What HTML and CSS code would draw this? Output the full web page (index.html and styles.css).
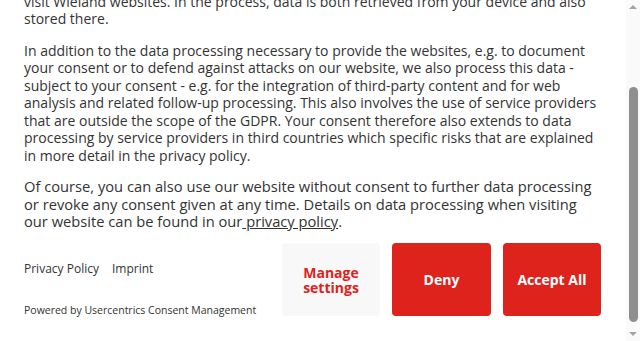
FILE: index.html
```html
<!DOCTYPE html>
<html lang="en">
<head>
  <meta charset="UTF-8">
  <meta name="viewport" content="width=device-width, initial-scale=1.0">
  <link rel="stylesheet" href="styles.css">
</head>
<body>

<div class="frame">
  <div class="banner" id="banner">
    <div class="banner-body">
      <h2 class="banner-title">Privacy Settings</h2>
      <p>We use cookies and similar technologies (hereinafter "technologies") when you<br>
      visit Wieland websites. In the process, data is both retrieved from your device and also
      stored there.</p>

      <p>In addition to the data processing necessary to provide the websites, e.g. to document
      your consent or to defend against attacks on our website, we also process this data -
      subject to your consent - e.g. for the integration of third-party content and for web
      analysis and related follow-up processing. This also involves the use of service providers
      that are outside the scope of the GDPR. Your consent therefore also extends to data
      processing by service providers in third countries which specific risks that are explained
      in more detail in the privacy policy.</p>

      <p class="closing">Of course, you can also use our website without consent to further data processing
      or revoke any consent given at any time. Details on data processing when visiting
      our website can be found in our<a href="#"> privacy policy</a>.</p>
    </div>

    <div class="banner-footer">
      <div class="footer-links">
        <div class="legal">
          <a href="#">Privacy Policy</a>
          <a href="#">Imprint</a>
        </div>
        <div class="powered">Powered by Usercentrics Consent Management</div>
      </div>
      <div class="buttons">
        <button class="btn btn-light">Manage settings</button>
        <button class="btn btn-red btn-deny">Deny</button>
        <button class="btn btn-red">Accept All</button>
      </div>
    </div>
  </div>

  <!-- scrollbar of the banner, scrolled to the bottom -->
  <div class="scrollbar">
    <div class="arrow arrow-up"></div>
    <div class="track">
      <div class="thumb"></div>
    </div>
    <div class="arrow arrow-down"></div>
  </div>
</div>

<script>
  var banner = document.getElementById('banner');
  banner.scrollTop = banner.scrollHeight;
</script>
</body>
</html>
```

FILE: styles.css
```css
html, body {
  margin: 0;
  padding: 0;
  background-color: #ffffff;
}
body {
  font-family: 'Open Sans', 'Liberation Sans', Arial, sans-serif;
  color: #333333;
}
.frame {
  display: flex;
  height: 100vh;
}
.banner {
  flex: 1;
  overflow: hidden;
}
.banner-body {
  padding: 16px 25px 0 24px;
}
.banner-title {
  font-size: 18px;
  font-weight: 700;
  margin: 0 0 12px 0;
}
.banner-body p {
  font-size: 14px;
  line-height: 17.5px;
  margin: 0 0 14px 0;
}
.banner-body p.closing {
  font-size: 14.7px;
  margin-bottom: 0;
}
.banner-body a {
  color: #333333;
  text-decoration: underline;
}
.banner-footer {
  display: flex;
  justify-content: space-between;
  align-items: flex-start;
  padding: 12px 25px 24px 24px;
}
.footer-links {
  padding-top: 17px;
}
.legal {
  display: flex;
  gap: 13px;
  font-size: 12px;
}
.legal a {
  color: #333333;
  text-decoration: none;
}
.powered {
  font-size: 10.5px;
  margin-top: 26px;
}
.buttons {
  display: flex;
  gap: 12px;
}
.btn {
  width: 98px;
  height: 73px;
  border: none;
  border-radius: 4px;
  font-family: 'Open Sans', 'Liberation Sans', Arial, sans-serif;
  font-size: 14px;
  font-weight: 700;
  line-height: 15.5px;
  padding: 2px 12px 0 12px;
}
.btn-deny {
  width: 99px;
}
.btn-light {
  background-color: #f8f8f8;
  color: #de221c;
}
.btn-red {
  background-color: #de221c;
  color: #ffffff;
}
.scrollbar {
  width: 14px;
  flex-shrink: 0;
  display: flex;
  flex-direction: column;
  align-items: center;
  background-color: #fafafa;
}
.arrow {
  height: 14px;
  width: 14px;
  display: flex;
  justify-content: center;
  align-items: center;
}
.arrow::before {
  content: "";
  width: 0;
  height: 0;
  border-left: 4px solid transparent;
  border-right: 4px solid transparent;
}
.arrow-up::before {
  border-bottom: 4px solid #a3a3a3;
}
.arrow-down::before {
  border-top: 4px solid #a3a3a3;
}
.track {
  flex: 1;
  width: 100%;
  display: flex;
  justify-content: center;
}
.thumb {
  width: 9px;
  height: 235px;
  margin-top: 73px;
  border-radius: 5px;
  background-color: #8f8f8f;
}
```
